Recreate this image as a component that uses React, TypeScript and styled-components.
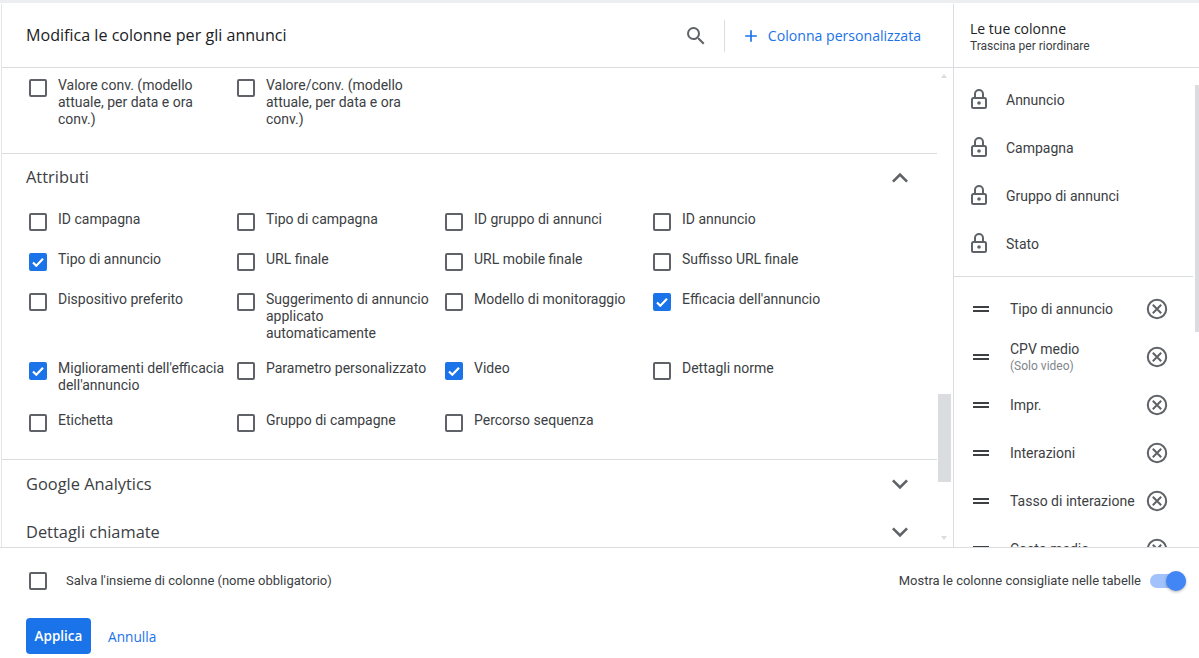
import { createGlobalStyle } from 'styled-components';
import styled from 'styled-components';
import { MdAdd, MdDragHandle, MdExpandLess, MdExpandMore, MdSearch } from 'react-icons/md';

const GlobalStyle = createGlobalStyle`
	html, body {
		margin: 0;
		padding: 0;
		height: 100%;
		overflow: hidden;
		background: #fff;
		font-family: Roboto, 'Liberation Sans', sans-serif;
		color: #3c4043;
	}
`;
const Page = styled.div`
	width: 1199px;
	height: 658px;
	box-sizing: border-box;
	border-top: 3px solid #eceef0;
	padding-top: 1px;
	display: flex;
	flex-direction: column;
`;
const Main = styled.div`
	flex: 0 0 544px;
	display: flex;
	border-bottom: 1px solid #dadce0;
	box-sizing: border-box;
	height: 544px;
	overflow: hidden;
`;
const LeftPanel = styled.div`
	margin-left: 1px;
	border-left: 1px solid #e4e5e7;
	box-sizing: border-box;
	border-right: 1px solid #dadce0;
	flex: 0 0 953px;
	display: flex;
	flex-direction: column;
`;
const RightPanel = styled.div`
	flex: 1;
	display: flex;
	flex-direction: column;
	min-width: 0;
`;
const Header = styled.div`
	height: 63px;
	flex: 0 0 63px;
	border-bottom: 1px solid #dadce0;
	display: flex;
	align-items: center;
`;
const Title = styled.h1`
	margin: 0 0 2px 24px;
	font-family: 'Open Sans', sans-serif;
	font-size: 16.1px;
	font-weight: 500;
	color: #202124;
	flex: 1;
`;
const SearchButton = styled.span`
	display: flex;
	color: #5f6368;
	font-size: 24px;
	margin-right: 16px;
`;
const Divider = styled.span`
	width: 1px;
	height: 32px;
	background: #dadce0;
	margin-right: 16px;
`;
const AddLink = styled.a`
	display: flex;
	align-items: center;
	gap: 7px;
	margin-right: 32px;
	color: #1a73e8;
	font-size: 14.1px;
	font-weight: 500;
	font-family: 'Open Sans', sans-serif;
`;
const Scroller = styled.div`
	position: relative;
	flex: 1;
	min-height: 0;
	overflow: hidden;
`;
const ScrollContent = styled.div`
	width: 935px;
`;
const Section = styled.section<{ $last?: boolean }>`
	border-bottom: ${(p) => (p.$last ? 'none' : '1px solid #dadce0')};
`;
const TopSection = styled(Section)`
	height: 86px;
	box-sizing: border-box;
`;
const SectionHead = styled.div`
	height: 48px;
	display: flex;
	align-items: center;
	justify-content: space-between;
	padding: 0 21px 0 24px;
	svg {
		font-size: 32px;
		color: #5f6368;
	}
`;
const SectionLabel = styled.span`
	margin-bottom: 2px;
	font-family: 'Open Sans', sans-serif;
	font-size: 16.4px;
	font-weight: 500;
	color: #3c4043;
`;
const AttributesHead = styled(SectionHead)`
	height: 47px;
`;
const Grid = styled.div`
	display: grid;
	grid-template-columns: repeat(4, 208px);
	padding: 9px 0 0 27px;
`;
const AttributesGrid = styled(Grid)`
	padding-top: 10px;
	padding-bottom: 7px;
`;
const Item = styled.label`
	display: flex;
	gap: 11px;
	min-height: 40px;
	padding-bottom: 18px;
	box-sizing: border-box;
	font-size: 14px;
	line-height: 17px;
	color: #3c4043;
`;
const ItemText = styled.span`
	width: 168px;
	flex: none;
`;
const Box = styled.span<{ $checked?: boolean }>`
	flex: none;
	width: 18px;
	height: 18px;
	margin-top: 2px;
	box-sizing: border-box;
	border: 2px solid ${(p) => (p.$checked ? '#1a73e8' : '#5f6368')};
	border-radius: 2px;
	background: ${(p) => (p.$checked ? '#1a73e8' : '#fff')};
	display: flex;
	align-items: center;
	justify-content: center;
`;
const ScrollThumb = styled.div<{ $right: number; $top: number; $width: number; $height: number }>`
	position: absolute;
	right: ${(p) => p.$right}px;
	top: ${(p) => p.$top}px;
	width: ${(p) => p.$width}px;
	height: ${(p) => p.$height}px;
	background: #dadce0;
`;
const ScrollArrow = styled.div<{ $right: number; $top: number; $down?: boolean }>`
	position: absolute;
	right: ${(p) => p.$right}px;
	top: ${(p) => p.$top}px;
	width: 0;
	height: 0;
	border-left: 3.5px solid transparent;
	border-right: 3.5px solid transparent;
	${(p) => (p.$down ? 'border-top: 4px solid #dadce0;' : 'border-bottom: 4px solid #dadce0;')}
`;
const ColumnsHeader = styled(Header)`
	display: block;
	box-sizing: content-box;
	height: 47px;
	flex: 0 0 47px;
	padding: 16px 0 0 16px;
`;
const ColumnsTitle = styled.div`
	font-family: 'Open Sans', sans-serif;
	font-size: 14px;
	font-weight: 500;
	line-height: 17px;
	color: #202124;
`;
const ColumnsHint = styled.div`
	font-size: 12px;
	line-height: 18px;
	color: #3c4043;
`;
const LockedList = styled.div`
	width: 239px;
	height: 209px;
	box-sizing: border-box;
	padding-top: 8px;
	border-bottom: 1px solid #dadce0;
`;
const LockedRow = styled.div`
	height: 48px;
	display: flex;
	align-items: center;
	gap: 15px;
	padding-left: 13px;
	font-size: 14px;
	color: #3c4043;
`;
const LockIcon = styled.svg`
	width: 24px;
	height: 24px;
	fill: none;
	stroke: #5f6368;
	stroke-width: 2;
	circle {
		fill: #5f6368;
		stroke: none;
	}
`;
const DragList = styled.div`
	padding-top: 8px;
`;
const DragRow = styled.div`
	height: 48px;
	display: flex;
	align-items: center;
	padding-left: 15px;
	font-size: 14px;
	line-height: 17px;
	color: #3c4043;
`;
const Handle = styled.span`
	display: flex;
	font-size: 24px;
	color: #3c4043;
	margin-right: 17px;
`;
const DragLabel = styled.div`
	width: 132px;
	white-space: nowrap;
`;
const SubLabel = styled.div`
	font-size: 12px;
	line-height: 16px;
	color: #80868b;
`;
const Remove = styled.svg`
	width: 24px;
	height: 24px;
	margin-left: 3px;
	fill: none;
	stroke: #5f6368;
	stroke-width: 2;
`;
const Footer = styled.div`
	flex: 1;
	padding: 0 13px 0 26px;
`;
const SaveRow = styled.div`
	height: 65px;
	display: flex;
	align-items: center;
	font-size: 13px;
	color: #3c4043;
`;
const SaveBox = styled(Box)`
	margin: 0 19px 0 3px;
`;
const SaveText = styled.span`
	flex: 1;
`;
const Toggle = styled.span`
	position: relative;
	width: 36px;
	height: 14px;
	margin-left: 9px;
	border-radius: 7px;
	background: #a1c2fa;
`;
const Thumb = styled.span`
	position: absolute;
	right: 0;
	top: -3px;
	width: 20px;
	height: 20px;
	border-radius: 50%;
	background: #4285f4;
	box-shadow: 0 1px 3px rgba(0, 0, 0, 0.3);
`;
const Actions = styled.div`
	display: flex;
	align-items: center;
	gap: 17px;
	padding-top: 5px;
`;
const ApplyButton = styled.button`
	width: 65px;
	height: 36px;
	border: none;
	border-radius: 4px;
	background: #1a73e8;
	color: #fff;
	font-family: 'Open Sans', sans-serif;
	font-size: 13.5px;
	font-weight: 600;
	padding: 0;
`;
const CancelLink = styled.a`
	color: #1a73e8;
	font-family: 'Open Sans', sans-serif;
	font-size: 13.7px;
	font-weight: 500;
`;
const CheckMark = styled.svg`
	width: 14px;
	height: 14px;
	fill: none;
	stroke: #fff;
	stroke-width: 2.2;
`;

const attributes = [
	{ label: 'ID campagna' },
	{ label: 'Tipo di campagna' },
	{ label: 'ID gruppo di annunci' },
	{ label: 'ID annuncio' },
	{ label: 'Tipo di annuncio', checked: true },
	{ label: 'URL finale' },
	{ label: 'URL mobile finale' },
	{ label: 'Suffisso URL finale' },
	{ label: 'Dispositivo preferito' },
	{ label: 'Suggerimento di annuncio applicato automaticamente' },
	{ label: 'Modello di monitoraggio' },
	{ label: "Efficacia dell'annuncio", checked: true },
	{ label: "Miglioramenti dell'efficacia dell'annuncio", checked: true },
	{ label: 'Parametro personalizzato' },
	{ label: 'Video', checked: true },
	{ label: 'Dettagli norme' },
	{ label: 'Etichetta' },
	{ label: 'Gruppo di campagne' },
	{ label: 'Percorso sequenza' },
];
const locked = ['Annuncio', 'Campagna', 'Gruppo di annunci', 'Stato'];
const selected = [
	{ label: 'Tipo di annuncio' },
	{ label: 'CPV medio', sub: '(Solo video)' },
	{ label: 'Impr.' },
	{ label: 'Interazioni' },
	{ label: 'Tasso di interazione' },
	{ label: 'Costo medio' },
];

const Check = ({ label, checked }: { label: string; checked?: boolean }) => (
	<Item>
		<Box $checked={checked}>
			{checked && (
				<CheckMark viewBox='0 0 14 14'>
					<path d='M2 7.5l3.3 3.3L12 3.8' />
				</CheckMark>
			)}
		</Box>
		<ItemText>{label}</ItemText>
	</Item>
);

const App = () => {
	return (
		<Page>
			<GlobalStyle />
			<Main>
				<LeftPanel>
					<Header>
						<Title>Modifica le colonne per gli annunci</Title>
						<SearchButton>
							<MdSearch />
						</SearchButton>
						<Divider />
						<AddLink>
							<MdAdd size={20} />
							Colonna personalizzata
						</AddLink>
					</Header>
					<Scroller>
						<ScrollContent>
							<TopSection>
								<Grid>
									<Check label='Valore conv. (modello attuale, per data e ora conv.)' />
									<Check label='Valore/conv. (modello attuale, per data e ora conv.)' />
								</Grid>
							</TopSection>
							<Section>
								<AttributesHead>
									<SectionLabel>Attributi</SectionLabel>
									<MdExpandLess />
								</AttributesHead>
								<AttributesGrid>
									{attributes.map((a) => (
										<Check key={a.label} label={a.label} checked={a.checked} />
									))}
								</AttributesGrid>
							</Section>
							<Section $last>
								<SectionHead>
									<SectionLabel>Google Analytics</SectionLabel>
									<MdExpandMore />
								</SectionHead>
								<SectionHead>
									<SectionLabel>Dettagli chiamate</SectionLabel>
									<MdExpandMore />
								</SectionHead>
							</Section>
						</ScrollContent>
						<ScrollArrow $right={6} $top={6} />
						<ScrollThumb $right={2} $top={326} $width={13} $height={88} />
						<ScrollArrow $right={6} $top={468} $down />
					</Scroller>
				</LeftPanel>
				<RightPanel>
					<ColumnsHeader>
						<ColumnsTitle>Le tue colonne</ColumnsTitle>
						<ColumnsHint>Trascina per riordinare</ColumnsHint>
					</ColumnsHeader>
					<Scroller>
						<LockedList>
							{locked.map((name) => (
								<LockedRow key={name}>
									<LockIcon viewBox='0 0 24 24'>
										<rect x='5' y='10' width='14' height='10' rx='1.5' />
										<path d='M8 10V6a4 4 0 0 1 8 0v4' />
										<circle cx='12' cy='15' r='1.8' />
									</LockIcon>
									{name}
								</LockedRow>
							))}
						</LockedList>
						<DragList>
							{selected.map((c) => (
								<DragRow key={c.label}>
									<Handle>
										<MdDragHandle />
									</Handle>
									<DragLabel>
										{c.label}
										{c.sub && <SubLabel>{c.sub}</SubLabel>}
									</DragLabel>
									<Remove viewBox='0 0 24 24'>
										<circle cx='12' cy='12' r='9.2' />
										<path d='M7.8 7.8l8.4 8.4M16.2 7.8l-8.4 8.4' />
									</Remove>
								</DragRow>
							))}
						</DragList>
						<ScrollThumb $right={0} $top={17} $width={4} $height={247} />
					</Scroller>
				</RightPanel>
			</Main>
			<Footer>
				<SaveRow>
					<SaveBox />
					<SaveText>Salva l'insieme di colonne (nome obbligatorio)</SaveText>
					Mostra le colonne consigliate nelle tabelle
					<Toggle>
						<Thumb />
					</Toggle>
				</SaveRow>
				<Actions>
					<ApplyButton>Applica</ApplyButton>
					<CancelLink>Annulla</CancelLink>
				</Actions>
			</Footer>
		</Page>
	);
};

export default App;
